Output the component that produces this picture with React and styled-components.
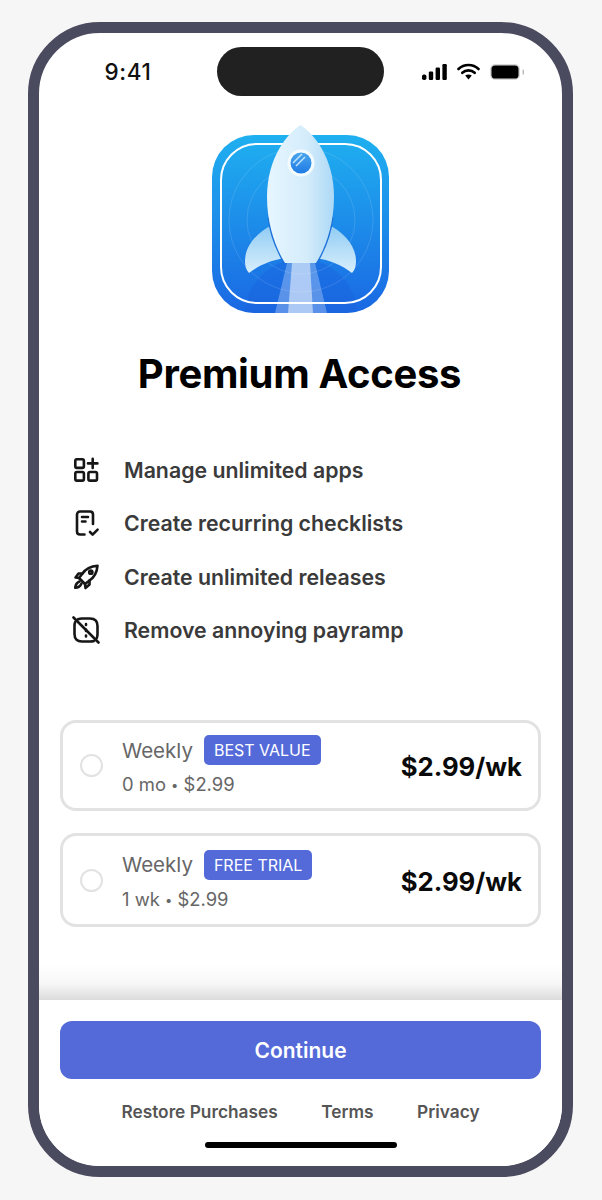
import React from "react";
import styled, { createGlobalStyle } from "styled-components";

const COLORS = {
  frame: "#4b4b5f",
  brand: "#546ad9",
  border: "#e2e2e2",
  grey: "#666666",
  dark: "#3a3a3a",
};

const GlobalStyle = createGlobalStyle`
  html, body {
    margin: 0;
    padding: 0;
    background: #f6f6f6;
  }
  body {
    font-family: Inter, "Liberation Sans", sans-serif;
  }
  * {
    box-sizing: border-box;
  }
`;

const Page = styled.div`
  width: 602px;
  height: 1200px;
  padding: 22px 29px 23px 28px;
`;

const Phone = styled.div`
  width: 545px;
  height: 1155px;
  border: 11px solid ${COLORS.frame};
  border-radius: 72px;
  background: #fff;
  display: flex;
  flex-direction: column;
  overflow: hidden;
`;

const StatusBar = styled.div`
  display: grid;
  grid-template-columns: 178px 167px 1fr;
  align-items: center;
  padding-top: 14px;
`;

const Time = styled.div`
  font-size: 22.5px;
  font-weight: 500;
  letter-spacing: 0.6px;
  color: #111;
  text-align: center;
  margin-top: -1px;
`;

const Island = styled.div`
  height: 49px;
  border-radius: 25px;
  background: #212121;
`;

const StatusIcons = styled.div`
  display: flex;
  align-items: center;
  justify-content: flex-end;
  gap: 10px;
  padding-right: 38px;
`;

const LogoWrap = styled.div`
  display: flex;
  justify-content: center;
  margin-top: 29px;
`;

const Title = styled.h1`
  margin: 37px 0 0;
  padding-right: 2px;
  font-size: 40px;
  line-height: 48px;
  font-weight: 700;
  letter-spacing: -0.33px;
  text-align: center;
  color: #000;
`;

const FeatureList = styled.ul`
  list-style: none;
  margin: 58px 0 0;
  padding: 0 0 0 33px;
  display: flex;
  flex-direction: column;
  gap: 25.4px;
`;

const Feature = styled.li`
  display: flex;
  align-items: center;
  gap: 24px;
  height: 28px;
  font-size: 21.3px;
  font-weight: 600;
  color: ${COLORS.dark};
`;

const PlanList = styled.div`
  margin: 76px 21px 0;
  display: flex;
  flex-direction: column;
  gap: 22px;
`;

const PlanCard = styled.div`
  height: ${(p) => p.$height}px;
  border: 3px solid ${COLORS.border};
  border-radius: 16px;
  display: flex;
  align-items: center;
  padding: 0 16px 0 17px;
`;

const Radio = styled.div`
  width: 23px;
  height: 23px;
  border: 2.5px solid ${COLORS.border};
  border-radius: 50%;
  flex-shrink: 0;
`;

const PlanInfo = styled.div`
  margin-left: 19px;
  flex: 1;
`;

const PlanTop = styled.div`
  display: flex;
  align-items: center;
  gap: 11px;
`;

const PlanName = styled.span`
  font-size: 20.5px;
  color: ${COLORS.grey};
`;

const Badge = styled.span`
  height: 30px;
  padding: 0 10px;
  border-radius: 5px;
  background: ${COLORS.brand};
  color: #fff;
  font-size: 16px;
  line-height: 30px;
`;

const PlanSub = styled.div`
  margin-top: 8px;
  font-size: 18.4px;
  line-height: 22px;
  color: ${COLORS.grey};
`;

const Dot = styled.span`
  font-size: 13px;
  vertical-align: 1px;
`;

const Price = styled.div`
  padding-top: 2px;
  font-size: 25.7px;
  font-weight: 700;
  color: #0a0a0a;
`;

const Sheet = styled.div`
  position: relative;
  margin-top: auto;
  height: 166px;
  padding: 21px 21px 0;
  background: #fff;

  &::before {
    content: "";
    position: absolute;
    left: 0;
    right: 0;
    top: -36px;
    height: 36px;
    background: linear-gradient(to bottom, rgba(0, 0, 0, 0), rgba(0, 0, 0, 0.03) 55%, rgba(0, 0, 0, 0.14));
  }
`;

const ContinueButton = styled.button`
  display: block;
  width: 100%;
  height: 58px;
  border: 0;
  border-radius: 12px;
  background: ${COLORS.brand};
  color: #fff;
  font-family: inherit;
  font-size: 21px;
  font-weight: 600;
`;

const Links = styled.div`
  display: flex;
  justify-content: center;
  gap: 43.5px;
  margin-top: 22px;
  font-size: 17.3px;
  line-height: 22px;
  font-weight: 600;
  color: #555;
`;

const HomeBar = styled.div`
  width: 192px;
  height: 6px;
  margin: 19px auto 0;
  border-radius: 3px;
  background: #000;
`;

const SignalIcon = () => (
  <svg width="25" height="16" viewBox="0 0 25 16">
    <rect x="0" y="10.5" width="4.4" height="5.5" rx="1.8" fill="#000" />
    <rect x="6.8" y="7.5" width="4.4" height="8.5" rx="1.2" fill="#000" />
    <rect x="13.6" y="3.5" width="4.4" height="12.5" rx="1.2" fill="#000" />
    <rect x="20.4" y="0" width="4.4" height="16" rx="1.2" fill="#000" />
  </svg>
);

const WifiIcon = () => (
  <svg width="23" height="17" viewBox="0 0 23 17">
    <path d="M1.5 6C7 0.7 16 0.7 21.5 6" fill="none" stroke="#000" strokeWidth="2.6" strokeLinecap="round" />
    <path d="M5.3 9.8C8.8 6.6 14.2 6.6 17.7 9.8" fill="none" stroke="#000" strokeWidth="2.6" strokeLinecap="round" />
    <path d="M8.2 12.5C10 11 13 11 14.8 12.5L11.5 16.6Z" fill="#000" />
  </svg>
);

const BatteryIcon = () => (
  <svg width="34" height="16" viewBox="0 0 34 16">
    <rect x="0" y="0" width="30" height="16" rx="5" fill="#d8d8d8" />
    <rect x="1.5" y="1.5" width="27" height="13" rx="3.6" fill="#000" />
    <rect x="32.6" y="5.5" width="1.2" height="5" rx="0.6" fill="#aaa" />
  </svg>
);

const AppLogo = () => (
  <svg width="177" height="188" viewBox="0 0 177 188">
    <defs>
      <linearGradient id="tile" x1="0" y1="0" x2="0" y2="1">
        <stop offset="0" stopColor="#1fb0f0" />
        <stop offset="1" stopColor="#1a68e3" />
      </linearGradient>
      <linearGradient id="body" x1="0" y1="0" x2="1" y2="0">
        <stop offset="0" stopColor="#e6f6fe" />
        <stop offset="0.6" stopColor="#d4ecfb" />
        <stop offset="1" stopColor="#acd8f6" />
      </linearGradient>
      <linearGradient id="fin" x1="0" y1="0" x2="0" y2="1">
        <stop offset="0" stopColor="#8fcbf3" />
        <stop offset="1" stopColor="#d9effc" />
      </linearGradient>
      <linearGradient id="glass" x1="0" y1="0" x2="0" y2="1">
        <stop offset="0" stopColor="#4ba6ec" />
        <stop offset="1" stopColor="#1f7be5" />
      </linearGradient>
      <clipPath id="tileClip">
        <rect x="0" y="10" width="177" height="178" rx="42" />
      </clipPath>
    </defs>
    <rect x="0" y="10" width="177" height="178" rx="42" fill="url(#tile)" />
    <g clipPath="url(#tileClip)">
      <circle cx="89" cy="190" r="56" fill="#1a63dd" opacity="0.45" />
      <circle cx="89" cy="95" r="54" fill="none" stroke="#fff" strokeOpacity="0.13" />
      <circle cx="89" cy="95" r="72" fill="none" stroke="#fff" strokeOpacity="0.13" />
      <path d="M75 138H103L115 188H63Z" fill="#fff" fillOpacity="0.28" />
      <path d="M80 138H98L101 188H76Z" fill="#fff" fillOpacity="0.5" />
    </g>
    <rect x="9" y="19" width="160" height="159" rx="36" fill="none" stroke="#fff" strokeWidth="2" />
    <path d="M60 100C46 107 33 120 33 136C33 141 34 145 37 148C47 140 60 135 73 133Z" fill="url(#fin)" />
    <path d="M117 100C131 107 144 120 144 136C144 141 143 145 140 148C130 140 117 135 104 133Z" fill="url(#fin)" />
    <path d="M57 92C59 110 66 126 73 138M120 92C118 110 111 126 104 138" fill="none" stroke="#1b70d8" strokeWidth="3" />
    <path
      d="M88.5 0C76 8 55 32 55 72C55 100 64 124 73 138H104C113 124 122 100 122 72C122 32 101 8 88.5 0Z"
      fill="url(#body)"
    />
    <circle cx="89" cy="38" r="13.5" fill="#f4fbff" />
    <circle cx="89" cy="38" r="10.5" fill="url(#glass)" />
    <path d="M81 38L90 29M84 41L93 32" stroke="#bfe3fb" strokeWidth="1.5" />
  </svg>
);

const IconSvg = styled.svg`
  width: 28px;
  height: 28px;
  flex-shrink: 0;
  fill: none;
  stroke: #161616;
  stroke-width: 2.6;
  stroke-linecap: round;
  stroke-linejoin: round;
`;

const AppsAddIcon = () => (
  <IconSvg viewBox="0 0 28 28">
    <rect x="3.3" y="3.3" width="8.6" height="8.6" rx="1.6" />
    <rect x="3.3" y="16" width="8.6" height="8.6" rx="1.6" />
    <rect x="16.4" y="16" width="8.6" height="8.6" rx="1.6" />
    <path d="M20.7 2.8V12M16 7.4H25.4" />
  </IconSvg>
);

const ChecklistIcon = () => (
  <IconSvg viewBox="0 0 28 28">
    <path d="M21 15V5.5C21 3.8 19.7 2.5 18 2.5H8C6.3 2.5 5 3.8 5 5.5V22.5C5 24.2 6.3 25.5 8 25.5H12.5" />
    <path d="M10 8H16M10 12.5H13.5" />
    <path d="M18 23L20.6 25.6L25.6 20.6" />
  </IconSvg>
);

const RocketIcon = () => (
  <IconSvg viewBox="0 0 28 28">
    <path d="M11 19L7 15L10.5 10.5C13.5 6 18.5 3.2 25.5 2.7C25 9.5 22 14.5 17.5 17.5L13 21Z" />
    <path d="M10.5 10.5H6.5L3.5 14.5L7 15" />
    <path d="M17.5 17.5V21.5L13.5 25L13 21" />
    <path d="M7.5 18.5C5 19.5 3.5 21.8 3.2 24.8C6.2 24.6 8.5 23 9.5 20.5" />
    <circle cx="18.8" cy="9.2" r="1.6" />
  </IconSvg>
);

const NoPaywallIcon = () => (
  <IconSvg viewBox="0 0 28 28">
    <path d="M6 3.3C7.2 2.8 8.5 2.5 10 2.5H18C23 2.5 25.5 5 25.5 10V18C25.5 19.5 25.3 20.8 24.8 22M22 25C20.8 25.4 19.5 25.5 18 25.5H10C5 25.5 2.5 23 2.5 18V10C2.5 8.5 2.7 7.2 3.2 6" />
    <path d="M1.5 1.5L26.5 26.5" />
    <path d="M14 8V9M14 13.5V15M14 19.5V20.5" />
  </IconSvg>
);

const FEATURES = [
  { label: "Manage unlimited apps", Icon: AppsAddIcon },
  { label: "Create recurring checklists", Icon: ChecklistIcon },
  { label: "Create unlimited releases", Icon: RocketIcon },
  { label: "Remove annoying payramp", Icon: NoPaywallIcon },
];

const PLANS = [
  { name: "Weekly", badge: "BEST VALUE", term: "0 mo", cost: "$2.99", price: "$2.99/wk", height: 91 },
  { name: "Weekly", badge: "FREE TRIAL", term: "1 wk", cost: "$2.99", price: "$2.99/wk", height: 94 },
];

const App = () => {
  return (
    <Page>
      <GlobalStyle />
      <Phone>
        <StatusBar>
          <Time>9:41</Time>
          <Island />
          <StatusIcons>
            <SignalIcon />
            <WifiIcon />
            <BatteryIcon />
          </StatusIcons>
        </StatusBar>

        <LogoWrap>
          <AppLogo />
        </LogoWrap>
        <Title>Premium Access</Title>

        <FeatureList>
          {FEATURES.map(({ label, Icon }) => (
            <Feature key={label}>
              <Icon />
              {label}
            </Feature>
          ))}
        </FeatureList>

        <PlanList>
          {PLANS.map((plan) => (
            <PlanCard key={plan.badge} $height={plan.height}>
              <Radio />
              <PlanInfo>
                <PlanTop>
                  <PlanName>{plan.name}</PlanName>
                  <Badge>{plan.badge}</Badge>
                </PlanTop>
                <PlanSub>
                  {plan.term} <Dot>•</Dot> {plan.cost}
                </PlanSub>
              </PlanInfo>
              <Price>{plan.price}</Price>
            </PlanCard>
          ))}
        </PlanList>

        <Sheet>
          <ContinueButton>Continue</ContinueButton>
          <Links>
            <span>Restore Purchases</span>
            <span>Terms</span>
            <span>Privacy</span>
          </Links>
          <HomeBar />
        </Sheet>
      </Phone>
    </Page>
  );
};

export default App;
